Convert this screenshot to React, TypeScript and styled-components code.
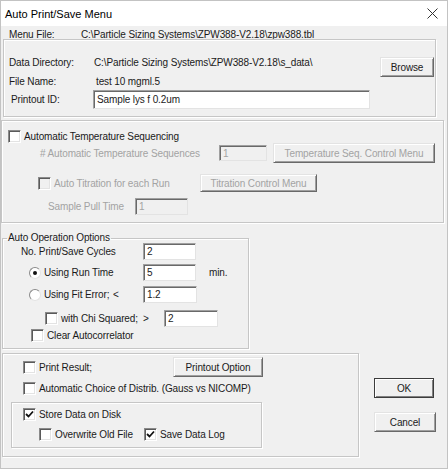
import React from 'react';
import styled, { createGlobalStyle, css } from 'styled-components';

const GlobalStyle = createGlobalStyle`
  html, body {
    margin: 0;
    padding: 0;
    background: #ffffff;
  }
  body {
    font-family: "Liberation Sans", Arial, sans-serif;
  }
`;

const Window = styled.div`
  width: 448px;
  height: 469px;
  box-sizing: border-box;
  border: 1px solid #c3c3c3;
  background: #f0f0f0;
  display: flex;
  flex-direction: column;
  overflow: hidden;
  font-size: 10px;
  letter-spacing: -0.12px;
  color: #1a1a1a;
`;

const TitleBar = styled.div`
  height: 25px;
  flex: none;
  background: #ffffff;
  display: flex;
  align-items: center;
  justify-content: space-between;
  padding: 0 9px 0 4px;
  font-size: 11px;
  letter-spacing: 0;
  color: #000;
`;

const MenuRow = styled.div`
  height: 13px;
  line-height: 17px;
  padding-left: 8px;
  display: flex;
  white-space: nowrap;
`;

const etched = css`
  border: 1px solid #c6c6c6;
  box-shadow: inset 1px 1px 0 #ffffff, 1px 1px 0 #ffffff;
  box-sizing: border-box;
`;

const DataBox = styled.div`
  ${etched};
  width: 433px;
  height: 78px;
  margin-left: 2px;
  display: flex;
  align-items: flex-start;
  padding-top: 12px;
`;

const InfoGrid = styled.div`
  margin-left: 5px;
  display: grid;
  grid-template-columns: 85px auto;
  grid-template-rows: 20px 18px 19px;
  align-items: center;
  white-space: nowrap;
`;

const TempSection = styled.div`
  ${etched};
  width: 443px;
  margin-top: 3px;
  padding: 8px 0 7px;
`;

const Options = styled.fieldset`
  ${etched};
  width: 247px;
  margin: 9px 0 0 1px;
  padding: 0 0 6px;
  min-width: 0;
`;

const Legend = styled.legend`
  margin-left: 4px;
  padding: 0 1px;
  line-height: 12px;
  font-size: 10px;
`;

const BottomArea = styled.div`
  display: flex;
  align-items: flex-start;
  margin-top: 4px;
`;

const OutputBox = styled.div`
  ${etched};
  width: 357px;
  margin-left: 1px;
  padding: 3px 0 8px;
`;

const StoreBox = styled.div`
  ${etched};
  width: 251px;
  margin: 7px 0 0 8px;
  padding: 4px 0 6px;
`;

const DialogButtons = styled.div`
  display: flex;
  flex-direction: column;
  margin: 25px 0 0 15px;
  gap: 14px;
`;

const Row = styled.div<{ $indent?: number; $h: number; $mt?: number }>`
  display: flex;
  align-items: center;
  height: ${(p) => p.$h}px;
  margin-top: ${(p) => p.$mt ?? 0}px;
  padding-left: ${(p) => p.$indent ?? 0}px;
  white-space: nowrap;
`;

const Text = styled.span<{ $w?: number; $off?: boolean; $ml?: number }>`
  display: inline-block;
  flex: none;
  width: ${(p) => (p.$w ? `${p.$w}px` : 'auto')};
  margin-left: ${(p) => p.$ml ?? 0}px;
  color: ${(p) => (p.$off ? '#a3a3a3' : '#1a1a1a')};
`;

const Field = styled.input<{ $w: number; $h: number }>`
  flex: none;
  box-sizing: border-box;
  width: ${(p) => p.$w}px;
  height: ${(p) => p.$h}px;
  padding: 0 0 0 3px;
  margin: 0;
  font-family: inherit;
  font-size: 10px;
  letter-spacing: -0.12px;
  color: #1a1a1a;
  background: #ffffff;
  border: 1px solid;
  border-color: #a0a0a0 #e3e3e3 #e3e3e3 #a0a0a0;
  box-shadow: inset 1px 1px 0 #696969;
  outline: none;

  &:disabled {
    background: #f0f0f0;
    color: #a3a3a3;
  }
`;

const Button = styled.button<{ $w: number; $h: number; $primary?: boolean }>`
  flex: none;
  box-sizing: border-box;
  width: ${(p) => p.$w}px;
  height: ${(p) => p.$h}px;
  margin: 0;
  padding: 0;
  font-family: inherit;
  font-size: 10px;
  letter-spacing: -0.12px;
  color: #1a1a1a;
  background: #f0f0f0;
  border: 1px solid;
  border-color: #e3e3e3 #696969 #696969 #e3e3e3;
  box-shadow: inset 1px 1px 0 #ffffff, inset -1px -1px 0 #a0a0a0;
  ${(p) =>
    p.$primary &&
    css`
      outline: 1px solid #3c3c3c;
      outline-offset: -1px;
      border-color: #3c3c3c;
      box-shadow: inset 1px 1px 0 #ffffff, inset -1px -1px 0 #808080;
    `}

  &:disabled {
    color: #a3a3a3;
  }
`;

const BoxShape = styled.span<{ $off?: boolean }>`
  flex: none;
  box-sizing: border-box;
  width: 13px;
  height: 13px;
  display: inline-flex;
  align-items: center;
  justify-content: center;
  background: ${(p) => (p.$off ? '#f0f0f0' : '#ffffff')};
  border: 1px solid;
  border-color: #8a8a8a #ffffff #ffffff #8a8a8a;
  box-shadow: inset 1px 1px 0 #5a5a5a, inset -1px -1px 0 #e3e3e3;
  margin-right: 3px;
`;

const RoundShape = styled.span`
  flex: none;
  box-sizing: border-box;
  width: 12px;
  height: 12px;
  border-radius: 50%;
  display: inline-flex;
  align-items: center;
  justify-content: center;
  background: #ffffff;
  border: 1px solid;
  border-color: #8a8a8a #e3e3e3 #e3e3e3 #8a8a8a;
  margin-right: 3px;
`;

const Dot = styled.span`
  width: 4px;
  height: 4px;
  border-radius: 50%;
  background: #111;
`;

const CheckBox = ({ checked, off }: { checked?: boolean; off?: boolean }) => (
  <BoxShape $off={off}>
    {checked && (
      <svg width="9" height="9" viewBox="0 0 9 9">
        <path d="M1 4 L3.5 6.5 L8 1.5" fill="none" stroke="#111" strokeWidth="1.8" />
      </svg>
    )}
  </BoxShape>
);

const Radio = ({ checked }: { checked?: boolean }) => (
  <RoundShape>{checked && <Dot />}</RoundShape>
);

const CloseIcon = () => (
  <svg width="11" height="11" viewBox="0 0 11 11">
    <path d="M0.5 0.5 L10.5 10.5 M10.5 0.5 L0.5 10.5" stroke="#333" strokeWidth="1" />
  </svg>
);

const App = () => {
  return (
    <>
      <GlobalStyle />
      <Window>
        <TitleBar>
          <span>Auto Print/Save Menu</span>
          <CloseIcon />
        </TitleBar>

        <MenuRow>
          <Text $w={72}>Menu File:</Text>
          <Text>C:\Particle Sizing Systems\ZPW388-V2.18\zpw388.tbl</Text>
        </MenuRow>

        <DataBox>
          <InfoGrid>
            <Text>Data Directory:</Text>
            <Text>C:\Particle Sizing Systems\ZPW388-V2.18\s_data\</Text>
            <Text>File Name:</Text>
            <Text $ml={2}>test 10 mgml.5</Text>
            <Text $ml={2}>Printout ID:</Text>
            <Field $w={277} $h={19} defaultValue="Sample lys f 0.2um" style={{ marginLeft: -1 }} />
          </InfoGrid>
          <Button $w={54} $h={20} style={{ marginLeft: 'auto', marginRight: 1, marginTop: 5 }}>
            Browse
          </Button>
        </DataBox>

        <TempSection>
          <Row $h={14} $indent={6}>
            <CheckBox />
            <Text>Automatic Temperature Sequencing</Text>
          </Row>
          <Row $h={20} $indent={38}>
            <Text $w={179} $off>
              # Automatic Temperature Sequences
            </Text>
            <Field $w={48} $h={16} defaultValue="1" disabled />
            <Button $w={162} $h={20} disabled style={{ marginLeft: 6 }}>
              Temperature Seq. Control Menu
            </Button>
          </Row>
          <Row $h={18} $mt={11} $indent={36}>
            <CheckBox off />
            <Text $w={146} $off>
              Auto Titration for each Run
            </Text>
            <Button $w={117} $h={18} disabled>
              Titration Control Menu
            </Button>
          </Row>
          <Row $h={17} $mt={6} $indent={46}>
            <Text $w={87} $off>
              Sample Pull Time
            </Text>
            <Field $w={53} $h={17} defaultValue="1" disabled />
          </Row>
        </TempSection>

        <Options>
          <Legend>Auto Operation Options</Legend>
          <Row $h={17} $mt={-1} $indent={18}>
            <Text $w={122}>No. Print/Save Cycles</Text>
            <Field $w={53} $h={17} defaultValue="2" />
          </Row>
          <Row $h={17} $mt={4} $indent={26}>
            <Radio checked />
            <Text $w={99}>Using Run Time</Text>
            <Field $w={53} $h={17} defaultValue="5" />
            <Text $ml={13}>min.</Text>
          </Row>
          <Row $h={17} $mt={5} $indent={26}>
            <Radio />
            <Text $w={69}>Using Fit Error;</Text>
            <Text $w={30}>&lt;</Text>
            <Field $w={54} $h={17} defaultValue="1.2" />
          </Row>
          <Row $h={18} $mt={6} $indent={42}>
            <CheckBox />
            <Text $w={82}>with Chi Squared;</Text>
            <Text $w={21}>&gt;</Text>
            <Field $w={54} $h={17} defaultValue="2" />
          </Row>
          <Row $h={13} $mt={2} $indent={28}>
            <CheckBox />
            <Text>Clear Autocorrelator</Text>
          </Row>
        </Options>

        <BottomArea>
          <OutputBox>
            <Row $h={20} $indent={20}>
              <CheckBox />
              <Text $w={134}>Print Result;</Text>
              <Button $w={90} $h={20}>
                Printout Option
              </Button>
            </Row>
            <Row $h={14} $mt={4} $indent={20}>
              <CheckBox />
              <Text>Automatic Choice of Distrib. (Gauss vs NICOMP)</Text>
            </Row>
            <StoreBox>
              <Row $h={14} $indent={11}>
                <CheckBox checked />
                <Text>Store Data on Disk</Text>
              </Row>
              <Row $h={14} $mt={6} $indent={27}>
                <CheckBox />
                <Text $w={89}>Overwrite Old File</Text>
                <CheckBox checked />
                <Text>Save Data Log</Text>
              </Row>
            </StoreBox>
          </OutputBox>
          <DialogButtons>
            <Button $w={60} $h={20} $primary>
              OK
            </Button>
            <Button $w={62} $h={20}>
              Cancel
            </Button>
          </DialogButtons>
        </BottomArea>
      </Window>
    </>
  );
};

export default App;
